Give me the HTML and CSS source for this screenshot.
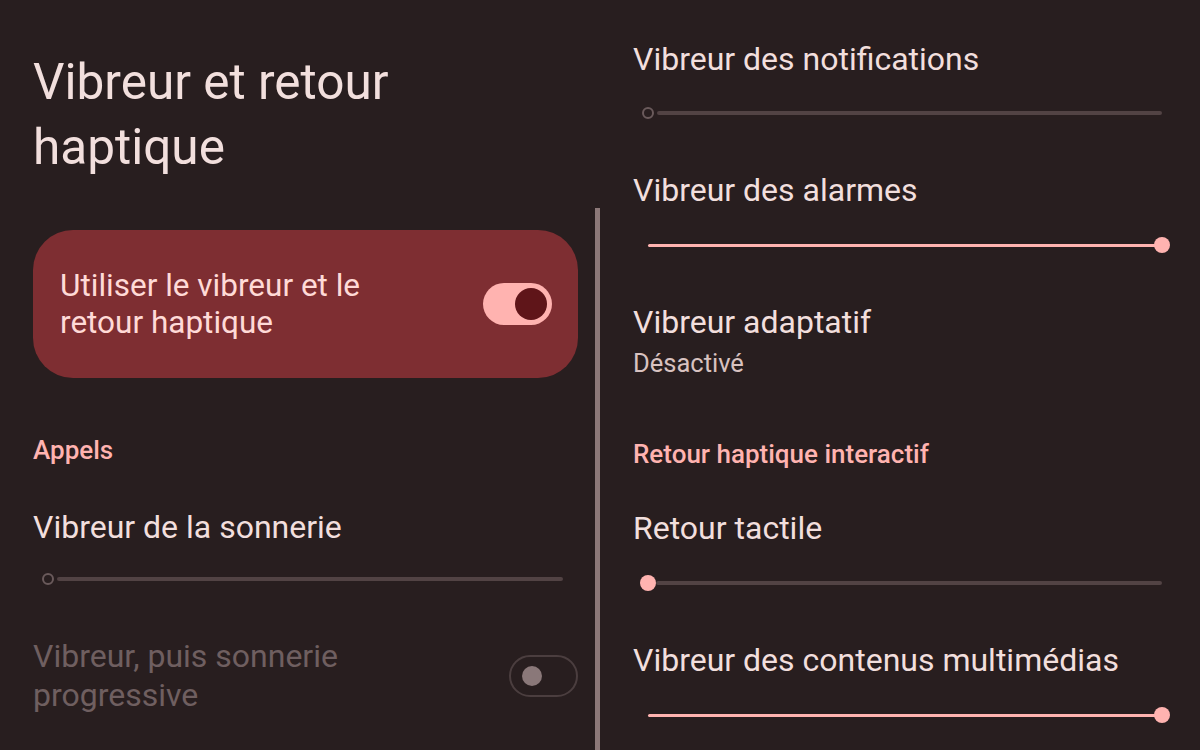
FILE: index.html
```html
<!DOCTYPE html>
<html lang="fr">
<head>
<meta charset="utf-8">
<title>Vibreur et retour haptique</title>
<link rel="stylesheet" href="styles.css">
</head>
<body>
<div class="screen">
  <div class="left">
    <h1 class="page-title">Vibreur et retour haptique</h1>
    <div class="main-card">
      <div class="main-card-text">Utiliser le vibreur et le retour haptique</div>
      <div class="switch switch-on"><span class="knob"></span></div>
    </div>
    <div class="section-head sh-left">Appels</div>
    <div class="pref-title pt-ring">Vibreur de la sonnerie</div>
    <div class="slider s-left">
      <span class="ring"></span><span class="track"></span>
    </div>
    <div class="toggle-row">
      <div class="toggle-text">Vibreur, puis sonnerie progressive</div>
      <div class="switch switch-off"><span class="knob"></span></div>
    </div>
  </div>
  <div class="divider"></div>
  <div class="right">
    <div class="pref">
      <div class="pref-title">Vibreur des notifications</div>
      <div class="slider s-first"><span class="ring"></span><span class="track"></span></div>
    </div>
    <div class="pref">
      <div class="pref-title">Vibreur des alarmes</div>
      <div class="slider"><span class="fill"></span><span class="thumb thumb-end"></span></div>
    </div>
    <div class="pref pref-text">
      <div class="pref-title">Vibreur adaptatif</div>
      <div class="pref-sub">Désactivé</div>
    </div>
    <div class="section-head sh-right">Retour haptique interactif</div>
    <div class="pref pref-tight">
      <div class="pref-title">Retour tactile</div>
      <div class="slider"><span class="thumb thumb-start"></span><span class="track"></span></div>
    </div>
    <div class="pref">
      <div class="pref-title">Vibreur des contenus multimédias</div>
      <div class="slider"><span class="fill"></span><span class="thumb thumb-end"></span></div>
    </div>
  </div>
</div>
</body>
</html>
```

FILE: styles.css
```css
* { box-sizing: border-box; }
html, body {
  margin: 0;
  padding: 0;
  background: #281e1f;
}
body {
  width: 1200px;
  height: 750px;
  overflow: hidden;
  font-family: Roboto, "Noto Sans", sans-serif;
  color: #f2dfdd;
}
.screen {
  display: flex;
  height: 750px;
}
.left {
  width: 595px;
  padding: 50px 17px 0 33px;
  display: flex;
  flex-direction: column;
}
.divider {
  width: 5px;
  margin-top: 208px;
  background: #8c7878;
}
.right {
  flex: 1;
  padding: 41px 23px 0 33px;
  display: flex;
  flex-direction: column;
}
.page-title {
  margin: 0;
  font-weight: 400;
  font-size: 49.5px;
  line-height: 65px;
  color: #f2dfdd;
  width: 440px;
}
.main-card {
  margin-top: 50px;
  height: 148px;
  border-radius: 40px;
  background: #7e2e32;
  display: flex;
  align-items: center;
  padding: 0 26px 0 27px;
}
.main-card-text {
  flex: 1;
  font-size: 31.5px;
  line-height: 37px;
  color: #ffdad7;
  padding-right: 90px;
}
.switch {
  width: 69px;
  height: 42px;
  border-radius: 21px;
  display: flex;
  align-items: center;
  flex-shrink: 0;
}
.switch-on {
  background: #ffb3b0;
  justify-content: flex-end;
  padding-right: 5px;
}
.switch-on .knob {
  width: 32px;
  height: 32px;
  border-radius: 50%;
  background: #5f1519;
}
.switch-off {
  border: 2px solid #4b3e3f;
  padding-left: 11px;
}
.switch-off .knob {
  width: 20px;
  height: 20px;
  border-radius: 50%;
  background: #8a7879;
}
.section-head {
  font-size: 26px;
  line-height: 30px;
  font-weight: 500;
  color: #ffb3b0;
  white-space: nowrap;
}
.sh-left { margin-top: 57px; }
.sh-right { margin-top: 63px; }
.pref-title {
  font-size: 32px;
  line-height: 36px;
  color: #f2dfdd;
  white-space: nowrap;
}
.pt-ring { margin-top: 44px; }
.pref-sub {
  margin-top: 10px;
  font-size: 25.5px;
  line-height: 26px;
  color: #d8c2c0;
}
.pref { margin-bottom: 49px; }
.pref-text { margin-bottom: 0; }
.pref-tight { margin-top: 41px; }
.slider {
  height: 20px;
  margin: 27px 15px 0;
  display: flex;
  align-items: center;
}
.s-first { margin-top: 26px; }
.s-left { margin-top: 24px; }
.ring {
  width: 12px;
  height: 12px;
  border-radius: 50%;
  border: 2.5px solid #6a5a5b;
  margin-left: -6px;
  margin-right: 3px;
  flex-shrink: 0;
}
.track {
  flex: 1;
  height: 4px;
  border-radius: 2px;
  background: #524344;
}
.fill {
  flex: 1;
  height: 3px;
  border-radius: 2px;
  background: #ffb3b0;
}
.thumb {
  width: 16px;
  height: 16px;
  border-radius: 50%;
  background: #ffb3b0;
  flex-shrink: 0;
}
.thumb-end { margin-right: -8px; margin-left: -2px; }
.thumb-start { margin-left: -8px; margin-right: 0; }
.toggle-row {
  margin-top: 48px;
  display: flex;
  align-items: center;
}
.toggle-text {
  flex: 1;
  font-size: 32px;
  line-height: 39px;
  color: #6f5f60;
  padding-right: 120px;
}
```
